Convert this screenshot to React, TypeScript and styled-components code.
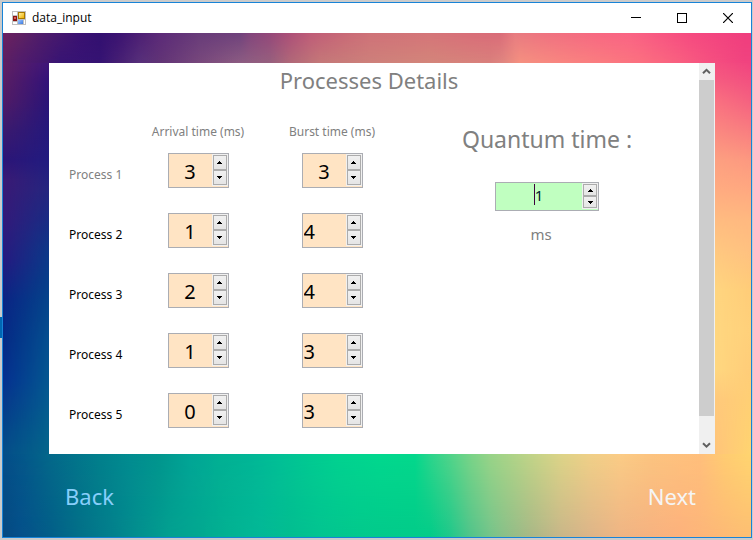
import React, { useState } from "react";
import styled, { createGlobalStyle, css } from "styled-components";

const GlobalStyle = createGlobalStyle`
  * { box-sizing: border-box; }
  html, body, #root { height: 100%; margin: 0; }
  body {
    background: #cbcbcb;
    font-family: "Noto Sans", "Open Sans", sans-serif;
    overflow: hidden;
  }
  button, input { font-family: inherit; }
`;

/* ---------- window frame ---------- */

const Desktop = styled.div`
  display: flex;
  min-height: 100vh;
  padding: 2px 1px 2px 2px;
  background: linear-gradient(#0067b3, #0067b3) 0 317px / 2px 21px no-repeat, #cbcbcb;
`;

const Window = styled.main`
  flex: 1;
  display: flex;
  flex-direction: column;
  border: 1px solid #1883d7;
  background: #fff;
`;

const TitleBar = styled.header`
  display: flex;
  align-items: center;
  height: 30px;
  padding-left: 9px;
  flex: none;
`;

const WindowName = styled.h1`
  flex: 1;
  margin: 0 0 0 6px;
  font-family: "Open Sans", sans-serif;
  font-size: 12px;
  line-height: 18px;
  font-weight: 400;
  color: #000;
`;

const CaptionButton = styled.button`
  display: flex;
  align-items: center;
  justify-content: center;
  width: 46px;
  height: 28px;
  padding: 0;
  border: 0;
  background: transparent;
`;

const Stage = styled.div`
  position: relative;
  flex: 1;
  display: flex;
  flex-direction: column;
  padding: 30px 36px 0 46px;
`;

const WallpaperArt = styled.svg`
  position: absolute;
  inset: 0;
  width: 100%;
  height: 100%;
`;

/* ---------- panel ---------- */

const Pane = styled.section`
  position: relative;
  flex: 1;
  display: flex;
  background: #fff;
`;

const PaneBody = styled.div`
  flex: 1;
  padding: 1px 4px 0 20px;
`;

const PaneTitle = styled.h2`
  margin: 0;
  padding-right: 26px;
  text-align: center;
  font-size: 22px;
  line-height: 32px;
  font-weight: 400;
  color: #808080;
`;

const Columns = styled.div`
  display: flex;
  align-items: flex-start;
  padding-top: 24px;
`;

const ProcessTable = styled.table`
  width: 330px;
  table-layout: fixed;
  border-collapse: collapse;
  td { padding: 0; height: 60px; }
`;

const NameCol = styled.col`
  width: 62px;
`;

const ColumnHead = styled.th`
  height: 20px;
  padding: 4px 0 0;
  font-size: 12px;
  line-height: 16px;
  font-weight: 400;
  color: #808080;
  white-space: nowrap;
`;

const ProcessName = styled.th<{ $dim?: boolean }>`
  padding: 10px 0 0;
  text-align: left;
  font-size: 12px;
  line-height: 20px;
  font-weight: 400;
  white-space: nowrap;
  color: ${(p) => (p.$dim ? "#808080" : "#000")};
`;

const Quantum = styled.div`
  flex: 1;
  display: flex;
  flex-direction: column;
  align-items: center;
  padding-top: 3px;
`;

const QuantumLabel = styled.label`
  font-size: 23px;
  line-height: 32px;
  color: #808080;
`;

const QuantumField = styled.div`
  display: flex;
  padding-top: 27px;
`;

const Unit = styled.span`
  padding-right: 12px;
  font-size: 15px;
  line-height: 20px;
  margin-top: 13px;
  color: #808080;
`;

/* ---------- numeric spinner ---------- */

const SpinBox = styled.div<{ $large?: boolean }>`
  position: relative;
  display: flex;
  margin: 0 auto;
  border: 1px solid #abadb3;
  ${(p) =>
    p.$large
      ? css`
          width: 104px;
          height: 29px;
          background: #c0ffc0;
          color: #002030;
          font-size: 15px;
        `
      : css`
          width: 61px;
          height: 35px;
          background: #ffe4c4;
          color: #000;
          font-size: 20px;
        `}
`;

const SpinInput = styled.input<{ $align: "left" | "center"; $large?: boolean }>`
  flex: 1;
  min-width: 0;
  padding: ${(p) => (p.$large ? "0 1px 4px" : "2px 1px 0")};
  border: 0;
  outline: 0;
  background: transparent;
  color: inherit;
  font-size: inherit;
  text-align: ${(p) => p.$align};
`;

const SpinButtons = styled.div`
  display: flex;
  flex-direction: column;
  width: 16px;
  margin-bottom: 1px;
  padding: 1px;
  background: #f0f0f0;
`;

const SpinButton = styled.button`
  flex: 1;
  display: flex;
  align-items: center;
  justify-content: center;
  padding: 0;
  border: 1px solid #acacac;
  background: linear-gradient(#f0f0f0, #e5e5e5);
`;

const Caret = styled.i`
  position: absolute;
  left: 38px;
  top: 1px;
  width: 1px;
  height: 21px;
  background: #3c003c;
`;

/* ---------- scroll bar ---------- */

const ScrollBar = styled.div`
  display: flex;
  flex-direction: column;
  width: 16px;
  padding-right: 1px;
  background: #f0f0f0;
`;

const ScrollArrow = styled.button`
  display: flex;
  align-items: center;
  justify-content: center;
  height: 17px;
  padding: 0;
  border: 0;
  background: transparent;
`;

const ScrollTrack = styled.div`
  flex: 1;
`;

const ScrollThumb = styled.div`
  height: 94%;
  background: #cdcdcd;
`;

/* ---------- footer ---------- */

const Footer = styled.footer`
  position: relative;
  display: flex;
  justify-content: space-between;
  align-items: flex-start;
  height: 83px;
  padding: 26px 19px 0 16px;
`;

const NavButton = styled.button<{ $tone: string }>`
  padding: 0;
  border: 0;
  background: transparent;
  font-size: 22px;
  line-height: 32px;
  color: ${(p) => p.$tone};
`;

/* ---------- drawings ---------- */

type Stops = [number, string][];

const topOuter: Stops = [
  [5, "#6b2060"], [20, "#602262"], [40, "#501d6a"], [60, "#45186e"], [80, "#3a1172"], [100, "#331070"],
  [120, "#3c1472"], [140, "#4d1f74"], [160, "#5c2a78"], [200, "#683c7a"], [240, "#6f427c"], [250, "#82457c"],
  [270, "#95487a"], [290, "#ad5078"], [310, "#bf5c78"], [340, "#c86877"], [370, "#cf7278"], [430, "#d57579"],
  [470, "#d96e79"], [500, "#da6c79"], [515, "#e87c80"], [540, "#ee7480"], [600, "#f86882"], [630, "#fa6484"],
  [660, "#f85782"], [690, "#f64a80"], [745, "#f03e7e"],
];
const topInner: Stops = [
  [5, "#5c2062"], [20, "#501c6c"], [40, "#45186f"], [60, "#381474"], [100, "#351373"], [120, "#472074"],
  [140, "#57307a"], [160, "#613476"], [200, "#78487c"], [240, "#8c5c82"], [270, "#96607e"], [290, "#b06878"],
  [320, "#c47878"], [370, "#cd807a"], [430, "#d3857a"], [490, "#d9807c"], [503, "#e08680"], [520, "#f59080"],
  [560, "#f88580"], [600, "#fa7c80"], [640, "#fb7080"], [680, "#f85f80"], [710, "#f55080"], [745, "#f0437f"],
];
const bottomInner: Stops = [
  [5, "#044e89"], [25, "#04588a"], [50, "#04688a"], [100, "#02808c"], [130, "#028c90"], [160, "#02968e"],
  [190, "#02a596"], [220, "#02b094"], [250, "#02b696"], [280, "#02c096"], [310, "#02ca92"], [340, "#02d290"],
  [380, "#02d88e"], [415, "#04d88c"], [430, "#2ad58c"], [450, "#50d48a"], [470, "#78d488"], [490, "#98d488"],
  [530, "#c0d488"], [560, "#dcd488"], [590, "#f0d088"], [620, "#fbcc86"], [650, "#fcc480"], [700, "#ffbf7c"],
  [725, "#ffcc72"], [748, "#ffd470"],
];
const bottomOuter: Stops = [
  [5, "#054a82"], [20, "#04508a"], [50, "#025e88"], [80, "#027088"], [110, "#027f8c"], [140, "#02908e"],
  [170, "#02a090"], [200, "#02a890"], [230, "#02b292"], [260, "#02b896"], [290, "#02bd90"], [320, "#02c490"],
  [360, "#02c98c"], [430, "#02cc88"], [450, "#20c88a"], [470, "#50c48a"], [490, "#74c48a"], [503, "#88c088"],
  [530, "#a8b886"], [560, "#c8b688"], [590, "#dcb488"], [620, "#eeb484"], [650, "#f6b280"], [680, "#fdb17c"],
  [745, "#fdbe72"],
];
const leftOuter: Stops = [
  [63, "#602062"], [100, "#521c66"], [130, "#3c1a6e"], [160, "#2c1577"], [180, "#3a1a75"], [220, "#331a7a"],
  [260, "#251a80"], [300, "#0a2484"], [340, "#042a86"], [380, "#043090"], [400, "#06388c"], [430, "#04458a"],
  [454, "#044e89"],
];
const leftInner: Stops = [
  [63, "#3e157a"], [80, "#32127a"], [100, "#2a1478"], [130, "#24187c"], [160, "#221c80"], [190, "#24267f"],
  [220, "#182c84"], [250, "#0c3888"], [280, "#063f8a"], [310, "#04488c"], [340, "#045090"], [400, "#045c90"],
  [454, "#04668a"],
];
const rightInner: Stops = [
  [63, "#f55080"], [80, "#f65c80"], [100, "#fa7080"], [130, "#fb8880"], [160, "#fda080"], [190, "#ffac80"],
  [220, "#ffbc80"], [250, "#ffc880"], [290, "#ffd680"], [370, "#ffd880"], [400, "#ffc97c"], [454, "#ffc47a"],
];
const rightOuter: Stops = [
  [63, "#f0437f"], [100, "#f46080"], [130, "#f87c80"], [160, "#fc9880"], [190, "#ffa880"], [220, "#ffb880"],
  [250, "#ffc080"], [290, "#ffcc78"], [330, "#ffd07a"], [370, "#ffcc78"], [400, "#ffcf74"], [454, "#ffd470"],
];

function Gradient({ id, stops, vertical }: { id: string; stops: Stops; vertical?: boolean }) {
  const start = vertical ? 33 : 3;
  const end = vertical ? 537 : 751;
  return (
    <linearGradient
      id={id}
      gradientUnits="userSpaceOnUse"
      x1={vertical ? 0 : start}
      x2={vertical ? 0 : end}
      y1={vertical ? start : 0}
      y2={vertical ? end : 0}
    >
      {stops.map(([at, color]) => (
        <stop key={at} offset={(at - start) / (end - start)} stopColor={color} />
      ))}
    </linearGradient>
  );
}

interface BandProps {
  id: string;
  x: number;
  y: number;
  w: number;
  h: number;
  near: Stops;
  far: Stops;
  vertical?: boolean;
}

/* One band of colour that fades from the near stops to the far stops across its thickness. */
function Band({ id, x, y, w, h, near, far, vertical }: BandProps) {
  return (
    <g>
      <Gradient id={`${id}-near`} stops={near} vertical={vertical} />
      <Gradient id={`${id}-far`} stops={far} vertical={vertical} />
      <linearGradient id={`${id}-fade`} x1="0" y1="0" x2={vertical ? 1 : 0} y2={vertical ? 0 : 1}>
        <stop offset="0" stopColor="#fff" stopOpacity="0" />
        <stop offset="1" stopColor="#fff" />
      </linearGradient>
      <mask id={`${id}-mask`}>
        <rect x={x} y={y} width={w} height={h} fill={`url(#${id}-fade)`} />
      </mask>
      <rect x={x} y={y} width={w} height={h} fill={`url(#${id}-near)`} />
      <rect x={x} y={y} width={w} height={h} fill={`url(#${id}-far)`} mask={`url(#${id}-mask)`} />
    </g>
  );
}

function Wallpaper() {
  return (
    <WallpaperArt viewBox="3 33 748 504" preserveAspectRatio="none" aria-hidden="true">
      <Band id="left" x={3} y={62} w={47} h={393} near={leftOuter} far={leftInner} vertical />
      <Band id="right" x={714} y={62} w={37} h={393} near={rightInner} far={rightOuter} vertical />
      <Band id="top" x={3} y={33} w={748} h={30} near={topOuter} far={topInner} />
      <Band id="bottom" x={3} y={454} w={748} h={83} near={bottomInner} far={bottomOuter} />
    </WallpaperArt>
  );
}

function FormIcon() {
  return (
    <svg width="14" height="14" viewBox="0 0 14 14" shapeRendering="crispEdges" aria-hidden="true">
      <defs>
        <linearGradient id="yellow" x1="0" y1="0" x2="1" y2="1">
          <stop offset="0" stopColor="#fff0a0" />
          <stop offset="1" stopColor="#f0b000" />
        </linearGradient>
        <linearGradient id="blue" x1="0" y1="0" x2="1" y2="1">
          <stop offset="0" stopColor="#a0c8ff" />
          <stop offset="1" stopColor="#3a78e0" />
        </linearGradient>
      </defs>
      <rect width="14" height="14" fill="#c0c0c0" />
      <path d="M1 1h4v3H1zM1 11h4v2H1zM12 9h1v4h-1z" fill="#fff" />
      <rect x="1" y="5" width="4" height="5" fill="#8c1410" />
      <rect x="2" y="6" width="2" height="2" fill="#d86058" />
      <rect x="6" y="1" width="7" height="7" fill="#a87800" />
      <rect x="7" y="2" width="5" height="5" fill="url(#yellow)" />
      <rect x="6" y="9" width="5" height="4" fill="url(#blue)" />
    </svg>
  );
}

function Triangle({ down }: { down?: boolean }) {
  return (
    <svg width="5" height="3" viewBox="0 0 5 3" shapeRendering="crispEdges" aria-hidden="true">
      <path d={down ? "M0 0h5v1H4v1H3v1H2V2H1V1H0z" : "M2 0h1v1h1v1h1v1H0V2h1V1h1z"} fill="#000" />
    </svg>
  );
}

function Chevron({ down }: { down?: boolean }) {
  return (
    <svg width="9" height="7" viewBox="0 0 9 7" aria-hidden="true">
      <path d={down ? "M1 1.2l3.5 3.5L8 1.2" : "M1 5.3l3.5-3.5L8 5.3"} fill="none" stroke="#606060" strokeWidth="2" />
    </svg>
  );
}

/* ---------- composed parts ---------- */

interface SpinnerProps {
  id?: string;
  label?: string;
  initial: number;
  align?: "left" | "center";
  large?: boolean;
}

function Spinner({ id, label, initial, align = "center", large }: SpinnerProps) {
  const [value, setValue] = useState(initial);
  const name = label ?? "Quantum time";
  return (
    <SpinBox $large={large}>
      <SpinInput
        id={id}
        aria-label={label}
        inputMode="numeric"
        $align={align}
        $large={large}
        value={value}
        onChange={(e) => setValue(Number(e.target.value) || 0)}
      />
      {large && <Caret />}
      <SpinButtons>
        <SpinButton type="button" aria-label={`Increase ${name}`} onClick={() => setValue(value + 1)}>
          <Triangle />
        </SpinButton>
        <SpinButton type="button" aria-label={`Decrease ${name}`} onClick={() => setValue(Math.max(0, value - 1))}>
          <Triangle down />
        </SpinButton>
      </SpinButtons>
    </SpinBox>
  );
}

const processes = [
  { name: "Process 1", arrival: 3, burst: 3 },
  { name: "Process 2", arrival: 1, burst: 4 },
  { name: "Process 3", arrival: 2, burst: 4 },
  { name: "Process 4", arrival: 1, burst: 3 },
  { name: "Process 5", arrival: 0, burst: 3 },
];

export default function App() {
  return (
    <>
      <GlobalStyle />
      <Desktop>
        <Window>
          <TitleBar>
            <FormIcon />
            <WindowName>data_input</WindowName>
            <CaptionButton type="button" aria-label="Minimize">
              <svg width="10" height="10" shapeRendering="crispEdges"><path d="M0 4h10v1H0z" /></svg>
            </CaptionButton>
            <CaptionButton type="button" aria-label="Maximize">
              <svg width="10" height="10" shapeRendering="crispEdges"><path d="M0 0h10v10H0zM1 1v8h8V1z" fillRule="evenodd" /></svg>
            </CaptionButton>
            <CaptionButton type="button" aria-label="Close">
              <svg width="10" height="10"><path d="M0 0l10 10M10 0L0 10" stroke="#000" strokeWidth="1.2" /></svg>
            </CaptionButton>
          </TitleBar>
          <Stage>
            <Wallpaper />
            <Pane>
              <PaneBody>
                <PaneTitle>Processes Details</PaneTitle>
                <Columns>
                  <ProcessTable>
                    <colgroup>
                      <NameCol />
                      <col />
                      <col />
                    </colgroup>
                    <thead>
                      <tr>
                        <ColumnHead scope="col" aria-label="Process" />
                        <ColumnHead scope="col">Arrival time (ms)</ColumnHead>
                        <ColumnHead scope="col">Burst time (ms)</ColumnHead>
                      </tr>
                    </thead>
                    <tbody>
                      {processes.map((p, i) => (
                        <tr key={p.name}>
                          <ProcessName scope="row" $dim={i === 0}>{p.name}</ProcessName>
                          <td><Spinner label={`${p.name} arrival time`} initial={p.arrival} /></td>
                          <td><Spinner label={`${p.name} burst time`} initial={p.burst} align={i === 0 ? "center" : "left"} /></td>
                        </tr>
                      ))}
                    </tbody>
                  </ProcessTable>
                  <Quantum>
                    <QuantumLabel htmlFor="quantum">Quantum time :</QuantumLabel>
                    <QuantumField><Spinner id="quantum" initial={1} large /></QuantumField>
                    <Unit>ms</Unit>
                  </Quantum>
                </Columns>
              </PaneBody>
              <ScrollBar>
                <ScrollArrow type="button" aria-label="Scroll up"><Chevron /></ScrollArrow>
                <ScrollTrack><ScrollThumb /></ScrollTrack>
                <ScrollArrow type="button" aria-label="Scroll down"><Chevron down /></ScrollArrow>
              </ScrollBar>
            </Pane>
            <Footer>
              <NavButton type="button" $tone="#87cefa">Back</NavButton>
              <NavButton type="button" $tone="#f5f5f5">Next</NavButton>
            </Footer>
          </Stage>
        </Window>
      </Desktop>
    </>
  );
}
